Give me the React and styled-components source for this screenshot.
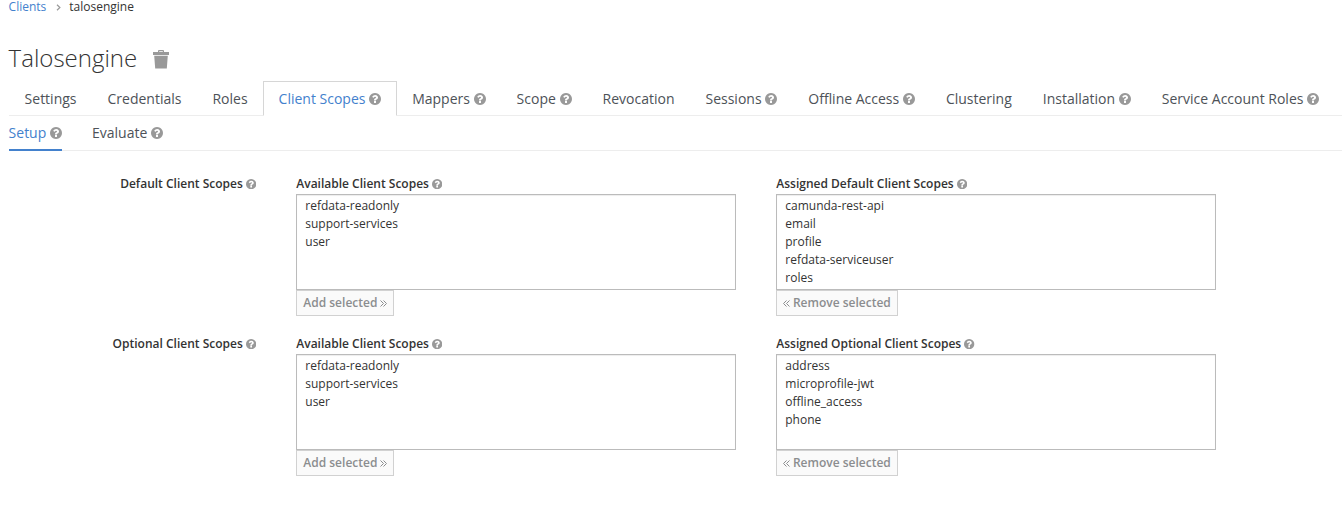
import React from 'react';
import styled, { createGlobalStyle, css } from 'styled-components';

const GlobalStyle = createGlobalStyle`
  * { box-sizing: border-box; }
  body {
    margin: 0;
    background: #fff;
    color: #333;
    font: 12px/20px "Open Sans", "Noto Sans", sans-serif;
    overflow: hidden;
  }
`;

const Page = styled.main`
  padding-left: 8.6px;
  height: 520px;
  overflow: hidden;
`;

const Breadcrumb = styled.nav`
  display: flex;
  align-items: center;
  height: 17px;
  padding-bottom: 4px;
  line-height: 13px;
`;

const Link = styled.a`
  color: #4381cd;
`;

const Chevron = styled.svg`
  width: 5px;
  height: 7px;
  margin: 2px 8.4px 0 9.6px;
`;

const Title = styled.h1`
  display: flex;
  align-items: center;
  height: 26px;
  margin: 28px 0 10px;
  font-size: 24px;
  font-weight: 300;
  line-height: 26px;
`;

const TrashIcon = styled.svg`
  width: 16px;
  height: 19px;
  margin: 2px 0 0 16px;
`;

const HelpSvg = styled.svg`
  flex: none;
  width: ${(p) => p.$size}px;
  height: ${(p) => p.$size}px;
  margin-left: ${(p) => p.$gap}px;
  fill: #999;
`;

const Tabs = styled.ul`
  display: flex;
  height: 35px;
  margin: 0;
  padding: 0;
  list-style: none;
  border-bottom: 1px solid #ededed;
`;

const Tab = styled.li`
  display: flex;
  align-items: center;
  height: 35px;
  margin-right: -1px;
  padding: 0 15px 0;
  border: 1px solid transparent;
  font-size: 14px;
  white-space: nowrap;
  color: #4d5258;
  ${(p) =>
    p.$active &&
    css`
      color: #4381cd;
      background: #fff;
      border-color: #d6d6d6;
      border-bottom-color: #fff;
    `}
`;

const SubTabs = styled(Tabs)`
  gap: 30px;
`;

const SubTab = styled.li`
  display: flex;
  align-items: center;
  height: 35px;
  font-size: 14px;
  color: ${(p) => (p.$active ? '#4381cd' : '#4d5258')};
  border-bottom: 2px solid ${(p) => (p.$active ? '#4381cd' : 'transparent')};
`;

const Form = styled.form`
  display: flex;
  flex-direction: column;
  gap: 20px;
  padding-top: 23px;
`;

const FormGroup = styled.div`
  display: grid;
  grid-template-columns: 247.7px 440px 440px;
  column-gap: 40px;
  height: 140px;
`;

const Label = styled.label`
  display: flex;
  align-items: center;
  justify-content: ${(p) => (p.$end ? 'flex-end' : 'flex-start')};
  height: 20px;
  font-weight: 600;

  svg {
    margin-bottom: 0.7px;
  }
`;

const Column = styled.div`
  display: flex;
  flex-direction: column;
  align-items: flex-start;
`;

const ListBox = styled.ul`
  width: 440px;
  height: 96px;
  margin: 0;
  padding: 2px 8px 0;
  list-style: none;
  border: 1px solid #bbb;
  box-shadow: inset 0 1px 1px rgba(3, 3, 3, 0.075);
`;

const Option = styled.li`
  height: 18px;
  line-height: 18px;
`;

const Button = styled.button`
  display: flex;
  align-items: center;
  gap: 2.6px;
  height: 26px;
  padding: 0 6px;
  font: 600 12px/20px "Open Sans", "Noto Sans", sans-serif;
  color: #8b8d8f;
  background: #fafafa;
  border: 1px solid #d1d1d1;
`;

const Angles = styled.svg`
  width: 7px;
  height: 7px;
  margin-top: 1px;
  fill: none;
  stroke: #8b8d8f;
`;

function Help({ size = 12, gap = 3.7 }) {
  return (
    <HelpSvg $size={size} $gap={gap} viewBox="128 128 1536 1536">
      <path d="M1024 1376v-192q0-14-9-23t-23-9h-192q-14 0-23 9t-9 23v192q0 14 9 23t23 9h192q14 0 23-9t9-23zm256-672q0-88-55.5-163t-138.5-116-170-41q-243 0-371 213-15 24 8 42l132 100q7 6 19 6 16 0 25-12 53-68 86-92 34-24 86-24 48 0 85.5 26t37.5 59q0 38-20 61t-68 45q-63 28-115.5 86.5t-52.5 125.5v36q0 14 9 23t23 9h192q14 0 23-9t9-23q0-19 21.5-49.5t54.5-49.5q32-18 49-28.5t46-35 44.5-48 28-60.5 12.5-81zm384 192q0 209-103 385.5t-279.5 279.5-385.5 103-385.5-103-279.5-279.5-103-385.5 103-385.5 279.5-279.5 385.5-103 385.5 103 279.5 279.5 103 385.5z" />
    </HelpSvg>
  );
}

const tabs = [
  ['Settings'],
  ['Credentials'],
  ['Roles'],
  ['Client Scopes', true],
  ['Mappers', true],
  ['Scope', true],
  ['Revocation'],
  ['Sessions', true],
  ['Offline Access', true],
  ['Clustering'],
  ['Installation', true],
  ['Service Account Roles', true],
];

const available = ['refdata-readonly', 'support-services', 'user'];

const groups = [
  {
    label: 'Default Client Scopes',
    assignedLabel: 'Assigned Default Client Scopes',
    assigned: ['camunda-rest-api', 'email', 'profile', 'refdata-serviceuser', 'roles'],
  },
  {
    label: 'Optional Client Scopes',
    assignedLabel: 'Assigned Optional Client Scopes',
    assigned: ['address', 'microprofile-jwt', 'offline_access', 'phone'],
  },
];

function ScopeColumn({ label, items, children }) {
  return (
    <Column>
      <Label>
        {label}
        <Help size={10.3} gap={3.2} />
      </Label>
      <ListBox>
        {items.map((item) => (
          <Option key={item}>{item}</Option>
        ))}
      </ListBox>
      <Button type="button">{children}</Button>
    </Column>
  );
}

export default function App() {
  return (
    <>
      <GlobalStyle />
      <Page>
        <Breadcrumb>
          <Link>Clients</Link>
          <Chevron viewBox="0 0 5 7">
            <path d="M1 .7 3.9 3.5 1 6.3" fill="none" stroke="#999" strokeWidth="1.2" />
          </Chevron>
          <span>talosengine</span>
        </Breadcrumb>
        <Title>
          Talosengine
          <TrashIcon viewBox="0 0 16 19">
            <path d="M0 2h5V1q0-1 1-1h4q1 0 1 1v1h5v3H0zM6.2 1.2V2h3.6v-.8zM1.2 5.8h13.6L13.8 18.4H2.2z" fill="#999" fillRule="evenodd" />
          </TrashIcon>
        </Title>
        <Tabs>
          {tabs.map(([name, help]) => (
            <Tab key={name} $active={name === 'Client Scopes'}>
              {name}
              {help && <Help />}
            </Tab>
          ))}
        </Tabs>
        <SubTabs>
          <SubTab $active>
            Setup
            <Help />
          </SubTab>
          <SubTab>
            Evaluate
            <Help />
          </SubTab>
        </SubTabs>
        <Form>
          {groups.map((group) => (
            <FormGroup key={group.label}>
              <Label $end>
                {group.label}
                <Help size={10.3} gap={3.2} />
              </Label>
              <ScopeColumn label="Available Client Scopes" items={available}>
                Add selected
                <Angles viewBox="0 0 7 7">
                  <path d="M.5.5l3 3-3 3M3.5.5l3 3-3 3" />
                </Angles>
              </ScopeColumn>
              <ScopeColumn label={group.assignedLabel} items={group.assigned}>
                <Angles viewBox="0 0 7 7">
                  <path d="M3.5.5l-3 3 3 3M6.5.5l-3 3 3 3" />
                </Angles>
                Remove selected
              </ScopeColumn>
            </FormGroup>
          ))}
        </Form>
      </Page>
    </>
  );
}
